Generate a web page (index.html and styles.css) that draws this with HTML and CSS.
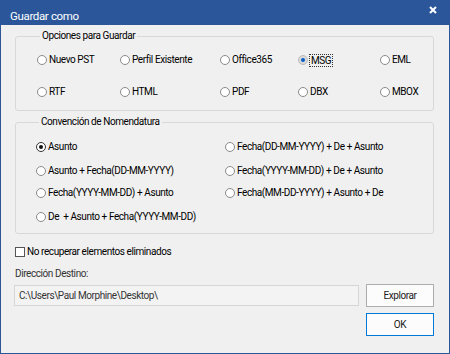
FILE: index.html
```html
<!DOCTYPE html>
<html lang="es">
<head>
<meta charset="utf-8">
<title>Guardar como</title>
<link rel="stylesheet" href="styles.css">
</head>
<body>
<div class="window">
  <div class="titlebar">
    <span class="title">Guardar como</span>
    <svg class="close" width="8" height="8" viewBox="0 0 8 8"><path d="M1 1L7 7M7 1L1 7" stroke="#fff" stroke-width="2" fill="none"/></svg>
  </div>
  <div class="content">
    <fieldset class="group g1">
      <legend>Opciones para Guardar</legend>
      <div class="grid5">
        <label class="radio"><span class="dot"></span>Nuevo PST</label>
        <label class="radio"><span class="dot"></span>Perfil Existente</label>
        <label class="radio"><span class="dot"></span>Office365</label>
        <label class="radio msg"><span class="dot checked-blue"></span><span class="focus">MSG</span></label>
        <label class="radio"><span class="dot"></span>EML</label>
        <label class="radio"><span class="dot"></span>RTF</label>
        <label class="radio"><span class="dot"></span>HTML</label>
        <label class="radio"><span class="dot"></span>PDF</label>
        <label class="radio"><span class="dot"></span>DBX</label>
        <label class="radio"><span class="dot"></span>MBOX</label>
      </div>
    </fieldset>
    <fieldset class="group g2">
      <legend>Convención de Nomendatura</legend>
      <div class="grid2">
        <label class="radio"><span class="dot checked"></span>Asunto</label>
        <label class="radio"><span class="dot"></span>Fecha(DD-MM-YYYY) + De + Asunto</label>
        <label class="radio"><span class="dot"></span>Asunto + Fecha(DD-MM-YYYY)</label>
        <label class="radio"><span class="dot"></span>Fecha(YYYY-MM-DD) + De + Asunto</label>
        <label class="radio"><span class="dot"></span>Fecha(YYYY-MM-DD) + Asunto</label>
        <label class="radio"><span class="dot"></span>Fecha(MM-DD-YYYY) + Asunto + De</label>
        <label class="radio"><span class="dot"></span><span class="pre">De  + Asunto + Fecha(YYYY-MM-DD)</span></label>
      </div>
    </fieldset>
    <label class="check"><span class="box"></span>No recuperar elementos eliminados</label>
    <div class="dest-label">Dirección Destino:</div>
    <div class="dest-row">
      <div class="path">C:\Users\Paul Morphine\Desktop\</div>
      <button class="btn">Explorar</button>
    </div>
    <div class="ok-row">
      <button class="btn btn-default">OK</button>
    </div>
  </div>
</div>
</body>
</html>
```
FILE: styles.css
```css
* { box-sizing: border-box; }
html, body { margin: 0; padding: 0; }
body {
  width: 450px;
  height: 354px;
  font-family: Roboto, "Liberation Sans", Arial, sans-serif;
  font-size: 10px;
  letter-spacing: -0.42px;
  color: #000;
  background: #f0f0f0;
}
.window {
  width: 450px;
  height: 354px;
  border: 1px solid #2b579a;
  border-top: none;
  background: #f0f0f0;
  display: flex;
  flex-direction: column;
}
.titlebar {
  height: 25px;
  margin: 0 -1px;
  background: #2b579a;
  color: #fff;
  display: flex;
  justify-content: space-between;
  align-items: flex-start;
  padding-left: 10px;
  padding-right: 13px;
}
.title {
  font-size: 11.5px;
  letter-spacing: -0.35px;
  line-height: 14px;
  margin-top: 9px;
}
.close { margin-top: 6px; }
.content {
  padding: 5px 15px 0 14px;
  display: flex;
  flex-direction: column;
}
.group {
  margin: 0;
  border: 1px solid #d8d8d8;
  border-radius: 3px;
  min-inline-size: 0;
}
.group legend {
  padding: 0 2px;
  margin-left: 3px;
  line-height: 12px;
  color: #000;
}
.g1 { padding: 11px 0 11px 21px; }
.grid5 {
  display: grid;
  grid-template-columns: 83px 100px 78px 82px 1fr;
  grid-auto-rows: 14px;
  row-gap: 18px;
}
.g2 { margin-top: 5px; padding: 12px 0 9px 20px; }
.grid2 {
  display: grid;
  grid-template-columns: 189px 1fr;
  grid-template-rows: 14px 24px 22px 24px;
  align-items: end;
}
.radio {
  display: flex;
  align-items: center;
  gap: 2px;
  white-space: nowrap;
  line-height: 14px;
  height: 14px;
}
.dot {
  width: 10px;
  height: 10px;
  border: 1px solid #8a8a8a;
  border-radius: 50%;
  background: #fff;
  flex: none;
  display: flex;
  align-items: center;
  justify-content: center;
}
.dot.checked { border-color: #333; }
.dot.checked::after {
  content: "";
  width: 4px;
  height: 4px;
  border-radius: 50%;
  background: #111;
}
.dot.checked-blue { border-color: #bcbcbc; background: #d9d9d9; }
.dot.checked-blue::after {
  content: "";
  width: 4px;
  height: 4px;
  border-radius: 50%;
  background: #0a5fc4;
}
.msg { gap: 1px; }
.focus {
  border: 1px dotted #333;
  padding: 0 1px;
  line-height: 11px;
}
.pre { white-space: pre; }
.check {
  margin-top: 11px;
  display: flex;
  align-items: center;
  gap: 2px;
  line-height: 14px;
}
.box {
  width: 10px;
  height: 10px;
  border: 1px solid #555;
  background: #fff;
  flex: none;
}
.dest-label {
  margin-top: 8px;
  line-height: 14px;
  color: #333;
}
.dest-row {
  margin-top: 3px;
  display: flex;
  align-items: center;
  gap: 7px;
}
.path {
  flex: 1;
  margin-left: -1px;
  height: 21px;
  border: 1px solid #d6d6d6;
  background: #f3f3f3;
  color: #333;
  padding-left: 4px;
  line-height: 19px;
}
.btn {
  width: 68px;
  height: 23px;
  border: 1px solid #adadad;
  background: #fcfcfc;
  font: inherit;
  letter-spacing: inherit;
  color: #222;
  padding: 0;
  flex: none;
}
.btn-default { border-color: #0078d7; }
.ok-row {
  margin-top: 6px;
  display: flex;
  justify-content: flex-end;
}
```
